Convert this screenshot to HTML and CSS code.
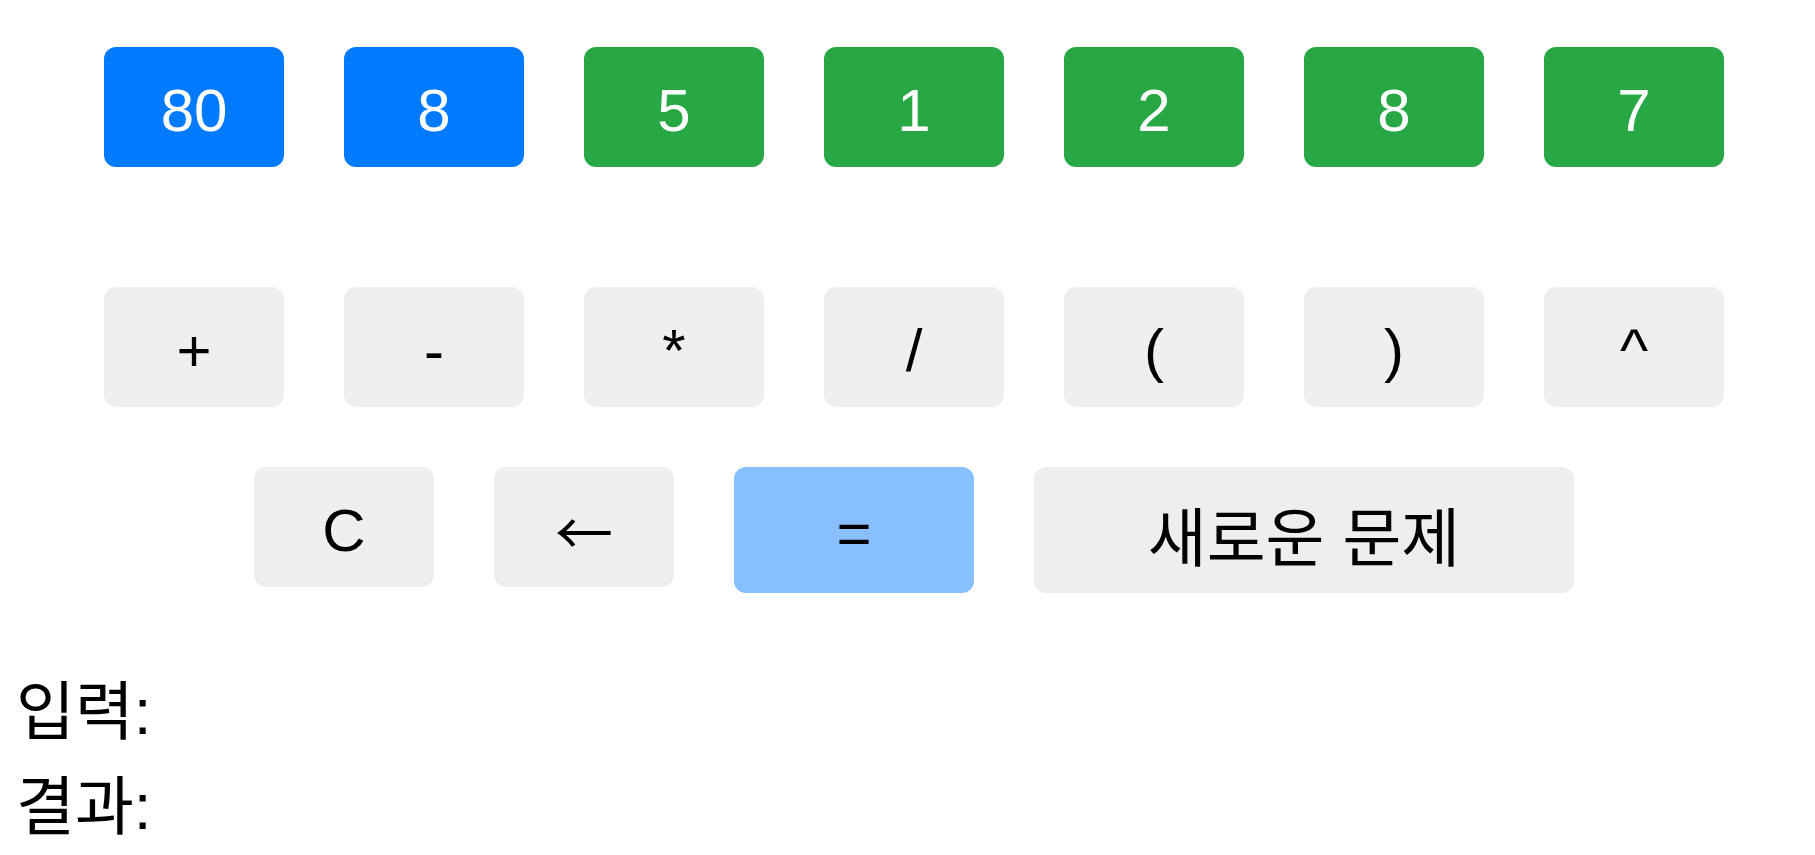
FILE: index.html
```html
<!DOCTYPE html>
<html lang="ko">
  <head>
    <meta charset="UTF-8" />
    <meta name="viewport" content="width=device-width, initial-scale=1.0" />
    <title>숫자 계산 게임</title>

    <link rel="stylesheet" href="styles.css">
  </head>
  <body>
    <div id="game">
      <div class="row numbers">
        <button class="key target">80</button>
        <button class="key target">8</button>
        <button class="key num">5</button>
        <button class="key num">1</button>
        <button class="key num">2</button>
        <button class="key num">8</button>
        <button class="key num">7</button>
      </div>

      <div class="row operators">
        <button class="key op">+</button>
        <button class="key op">-</button>
        <button class="key op">*</button>
        <button class="key op">/</button>
        <button class="key op">(</button>
        <button class="key op">)</button>
        <button class="key op">^</button>
      </div>

      <div class="row controls">
        <button class="key op">C</button>
        <button class="key op back">&larr;</button>
        <button class="key equals">=</button>
        <button class="key newgame">새로운 문제</button>
      </div>
    </div>

    <div id="output">
      <div class="line">입력: <span id="expression"></span></div>
      <div class="line">결과: <span id="result"></span></div>
    </div>
  </body>
</html>
```

FILE: styles.css
```css
body {
  margin: 0;
  font-family: "Liberation Sans", "Noto Sans CJK KR", sans-serif;
  background-color: #fff;
  color: #000;
}

#game {
  padding: 47px 0 0 13px;
}

.row {
  display: flex;
  justify-content: center;
  align-items: flex-start;
  gap: 60px;
}

.numbers {
  margin-bottom: 120px;
}

.operators {
  margin-bottom: 60px;
}

.key {
  width: 180px;
  height: 120px;
  border: none;
  border-radius: 12px;
  font-family: "Liberation Sans", "Noto Sans CJK KR", sans-serif;
  font-size: 60px;
  padding: 6px 0 0;
  cursor: pointer;
}

.target {
  background-color: #007bff;
  color: #fff;
}

.num {
  background-color: #28a745;
  color: #fff;
}

.op {
  background-color: #efefef;
  color: #000;
}

.back {
  font-family: "Noto Sans CJK KR", sans-serif;
  font-size: 58px;
}

.equals {
  width: 240px;
  height: 126px;
  background-color: #88bfff;
  color: #000;
}

.newgame {
  width: 540px;
  height: 126px;
  background-color: #eee;
  color: #000;
  font-family: "Noto Sans CJK KR", sans-serif;
  font-size: 64px;
}

#output {
  padding: 72px 0 0 16px;
}

.line {
  font-family: "Liberation Sans", "Noto Sans CJK KR", sans-serif;
  font-size: 64px;
  line-height: 95px;
}
```
